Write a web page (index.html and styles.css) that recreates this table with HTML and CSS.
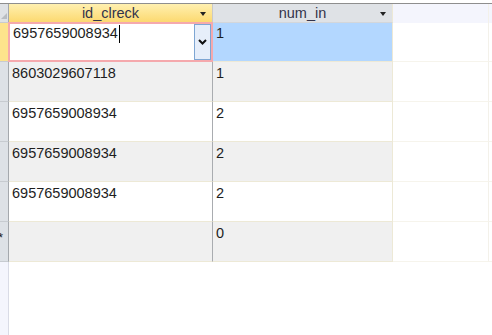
FILE: index.html
```html
<!DOCTYPE html>
<html lang="en">
<head>
    <meta charset="UTF-8">
    <title>Datasheet</title>
    <link rel="stylesheet" href="styles.css">
</head>
<body>
<div class="sheet">
    <div class="row head">
        <div class="sel corner"><span class="corner-tri"></span></div>
        <div class="cell hcell active-col">id_clreck<span class="tri"></span></div>
        <div class="cell hcell">num_in<span class="tri"></span></div>
        <div class="cell hcell blank"></div>
        <div class="cell hcell blank last"></div>
    </div>
    <div class="row current">
        <div class="sel cur-sel"></div>
        <div class="cell c1 editing">
            <span class="edit-text">6957659008934<span class="caret"></span></span>
            <span class="drop-btn">
                <svg width="9" height="6" viewBox="0 0 9 6"><path d="M1 1 L4.5 4.5 L8 1" fill="none" stroke="#111" stroke-width="2"/></svg>
            </span>
        </div>
        <div class="cell c2 picked">1</div>
        <div class="cell blank"></div>
        <div class="cell blank last"></div>
    </div>
    <div class="row alt">
        <div class="sel"></div>
        <div class="cell c1">8603029607118</div>
        <div class="cell c2">1</div>
        <div class="cell blank"></div>
        <div class="cell blank last"></div>
    </div>
    <div class="row">
        <div class="sel"></div>
        <div class="cell c1">6957659008934</div>
        <div class="cell c2">2</div>
        <div class="cell blank"></div>
        <div class="cell blank last"></div>
    </div>
    <div class="row alt">
        <div class="sel"></div>
        <div class="cell c1">6957659008934</div>
        <div class="cell c2">2</div>
        <div class="cell blank"></div>
        <div class="cell blank last"></div>
    </div>
    <div class="row">
        <div class="sel"></div>
        <div class="cell c1">6957659008934</div>
        <div class="cell c2">2</div>
        <div class="cell blank"></div>
        <div class="cell blank last"></div>
    </div>
    <div class="row alt new-row">
        <div class="sel star-sel"><span class="star">*</span></div>
        <div class="cell c1"></div>
        <div class="cell c2">0</div>
        <div class="cell blank"></div>
        <div class="cell blank last"></div>
    </div>
    <div class="filler">
        <div class="sel empty-sel"></div>
        <div class="cell"></div>
    </div>
</div>
</body>
</html>
```
FILE: styles.css
```css
body {
    margin: 0;
    width: 492px;
    height: 335px;
    overflow: hidden;
    background: #ffffff;
    font-family: "Liberation Sans", Arial, sans-serif;
}

.sheet {
    margin-top: 3px;
    border-top: 1px solid #8e8e8e;
}

.row {
    display: grid;
    grid-template-columns: 9px 204px 180px 96px 1fr;
    height: 40px;
    font-size: 14.5px;
    color: #1e1e1e;
}

.cell {
    box-sizing: border-box;
    border-bottom: 1px solid #ede9d6;
    border-right: 1px solid #ede9d6;
    padding: 3px 0 0 3px;
    line-height: 17px;
}

.c1 {
    border-right: 1px solid #a9acb0;
}

.blank {
    background: #ffffff;
    border-bottom-color: #f6f4ec;
    border-right-color: #f3f1ea;
}

.last {
    border-right: none;
}

.alt .c1,
.alt .c2 {
    background: #f0f0f0;
}

.sel {
    box-sizing: border-box;
    background: #dde1e6;
    border-right: 1px solid #a4a8ad;
    border-bottom: 1px solid #c7cbd0;
}

/* header */

.head {
    height: 18px;
    font-size: 14.5px;
}

.hcell {
    position: relative;
    text-align: center;
    padding: 0;
    line-height: 18px;
    background: #dfe2e6;
    color: #33334a;
    border-bottom: 1px solid #d3d6da;
}

.hcell.active-col {
    background: linear-gradient(#fff0b0, #fcd970);
    border-right: 1px solid #c9c9c9;
}

.hcell.blank {
    background: #f4f5fd;
    border-bottom: none;
}

.tri {
    position: absolute;
    right: 6px;
    top: 8px;
    width: 0;
    height: 0;
    border-left: 3.5px solid transparent;
    border-right: 3.5px solid transparent;
    border-top: 4px solid #222;
}

.corner {
    position: relative;
    background: #dfe2e6;
}

.corner-tri {
    position: absolute;
    right: 1px;
    bottom: 3px;
    width: 0;
    height: 0;
    border-left: 6px solid transparent;
    border-bottom: 6px solid #b9bdc2;
}

/* current row */

.cur-sel {
    background: #fde38c;
}

.editing {
    position: relative;
    border: 2px solid #f5a9ad;
    margin-left: -1px;
    padding: 0 0 0 3px;
    background: #ffffff;
}

.edit-text {
    display: inline-block;
    margin-top: 1px;
}

.caret {
    display: inline-block;
    width: 1px;
    height: 18px;
    margin-left: 1px;
    vertical-align: top;
    background: #000;
}

.drop-btn {
    position: absolute;
    right: 0;
    top: 0;
    bottom: 0;
    width: 17px;
    box-sizing: border-box;
    border: 1px solid #7ea6d3;
    background: #e6eefa;
    display: flex;
    align-items: center;
    justify-content: center;
}

.picked {
    background: #b3d7ff;
}

/* new record row */

.star-sel {
    display: flex;
    justify-content: flex-end;
    overflow: hidden;
    font-size: 13px;
    line-height: 17px;
    padding-top: 7px;
}

.star {
    margin-right: 5px;
}

.filler {
    display: grid;
    grid-template-columns: 9px 1fr;
    height: 80px;
}

.empty-sel {
    background: #f4f5fd;
    border-right: 1px solid #d9dbe6;
    border-bottom: none;
}

.filler .cell {
    border: none;
}
```
